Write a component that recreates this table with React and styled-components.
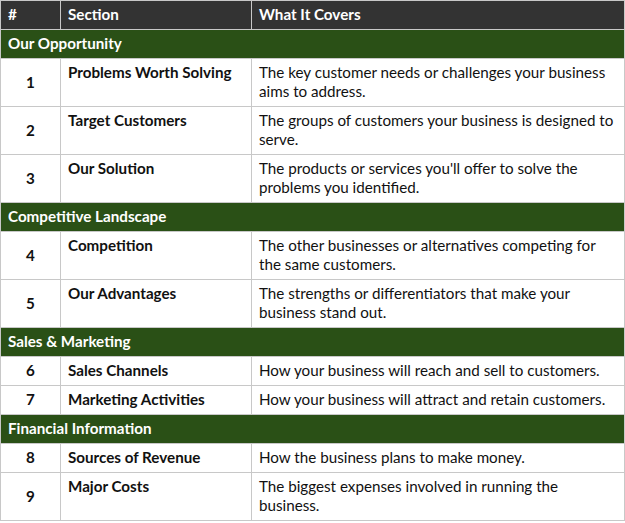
import React from "react";
import styled, { createGlobalStyle } from "styled-components";

const GlobalStyle = createGlobalStyle`
  html, body {
    margin: 0;
    padding: 0;
    background: #ffffff;
  }
  body {
    font-family: "Lato", "Noto Sans", sans-serif;
    color: #111;
  }
`;

const groups = [
  {
    title: "Our Opportunity",
    rows: [
      [1, "Problems Worth Solving", "The key customer needs or challenges your business aims to address."],
      [2, "Target Customers", "The groups of customers your business is designed to serve."],
      [3, "Our Solution", "The products or services you'll offer to solve the problems you identified."],
    ],
  },
  {
    title: "Competitive Landscape",
    rows: [
      [4, "Competition", "The other businesses or alternatives competing for the same customers."],
      [5, "Our Advantages", "The strengths or differentiators that make your business stand out."],
    ],
  },
  {
    title: "Sales & Marketing",
    rows: [
      [6, "Sales Channels", "How your business will reach and sell to customers."],
      [7, "Marketing Activities", "How your business will attract and retain customers."],
    ],
  },
  {
    title: "Financial Information",
    rows: [
      [8, "Sources of Revenue", "How the business plans to make money."],
      [9, "Major Costs", "The biggest expenses involved in running the business."],
    ],
  },
];

export default function App() {
  return (
    <>
      <GlobalStyle />
      <Table>
        <colgroup>
          <col style={{ width: 60 }} />
          <col style={{ width: 191 }} />
          <col />
        </colgroup>
        <thead>
          <tr>
            <HeadCell>#</HeadCell>
            <HeadCell>Section</HeadCell>
            <HeadCell>What It Covers</HeadCell>
          </tr>
        </thead>
        <tbody>
          {groups.map((group) => (
            <React.Fragment key={group.title}>
              <tr>
                <GroupCell colSpan={3}>{group.title}</GroupCell>
              </tr>
              {group.rows.map(([num, name, text]) => (
                <tr key={num}>
                  <NumCell>{num}</NumCell>
                  <Cell bold>{name}</Cell>
                  <Cell>{text}</Cell>
                </tr>
              ))}
            </React.Fragment>
          ))}
        </tbody>
      </Table>
    </>
  );
}

const Table = styled.table`
  width: 625px;
  border-collapse: collapse;
  table-layout: fixed;
  font-size: 15.2px;
  line-height: 19px;
`;

const HeadCell = styled.th`
  background: #333333;
  color: #ffffff;
  font-weight: 700;
  text-align: left;
  padding: 4px 7px 5px;
  border: 1px solid #c8c8c8;
`;

const GroupCell = styled.td`
  background: #2a5016;
  color: #ffffff;
  font-weight: 700;
  padding: 4px 7px 5px;
  border: 1px solid #c8c8c8;
`;

const Cell = styled.td`
  vertical-align: top;
  padding: 4px 7px 5px;
  border: 1px solid #c8c8c8;
  font-weight: ${(p) => (p.bold ? 700 : 400)};
`;

const NumCell = styled(Cell)`
  vertical-align: middle;
  text-align: center;
  font-weight: 700;
`;
